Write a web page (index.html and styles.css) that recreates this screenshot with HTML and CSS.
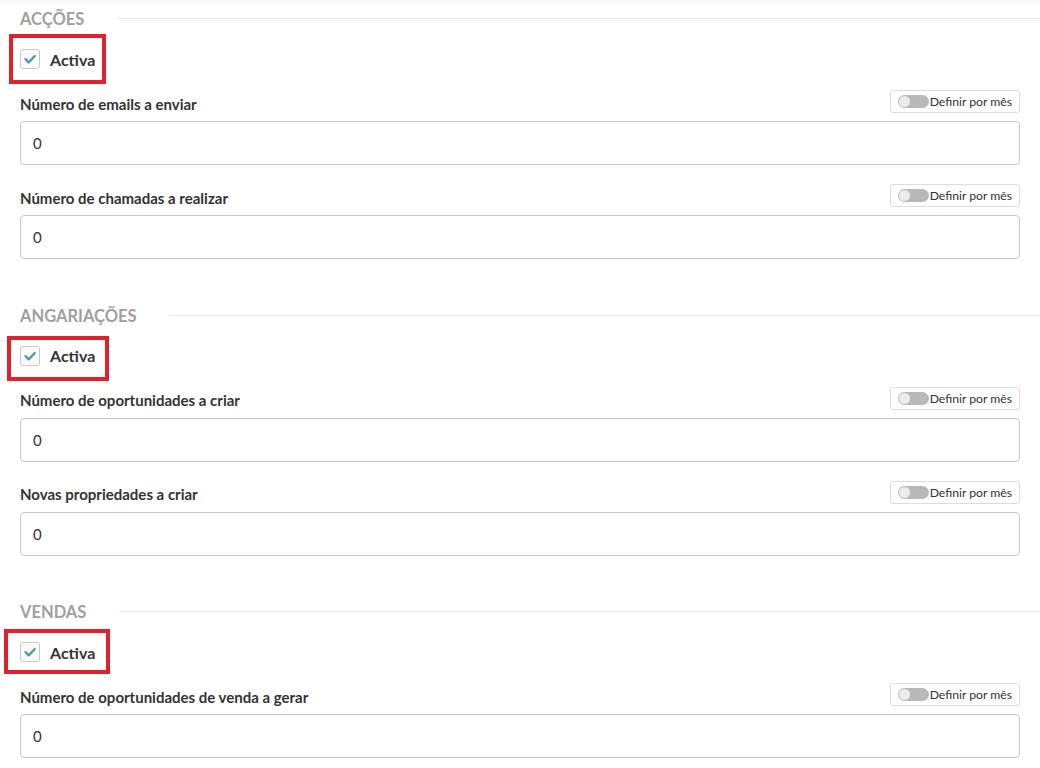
FILE: index.html
```html
<!DOCTYPE html>
<html lang="pt">
<head>
<meta charset="utf-8">
<title>Objetivos</title>
<link rel="stylesheet" href="styles.css">
</head>
<body>
<div class="topshade"></div>
<main class="page">
  <section class="group">
    <h2 class="group-title"><span>Acções</span></h2>
    <div class="active-row mark-a">
      <span class="checkbox"><svg viewBox="0 0 20 20" width="20" height="20"><path d="M5.5 10.2l3.2 3.2 6-6.2" fill="none" stroke="#4f9ea4" stroke-width="2.4" stroke-linecap="round" stroke-linejoin="round"/></svg></span>
      <span class="active-label">Activa</span>
    </div>
    <div class="field">
      <div class="field-head">
        <label class="field-label">Número de emails a enviar</label>
        <button class="toggle-btn"><span class="track"><span class="knob"></span></span>Definir por mês</button>
      </div>
      <div class="input">0</div>
    </div>
    <div class="field">
      <div class="field-head">
        <label class="field-label">Número de chamadas a realizar</label>
        <button class="toggle-btn"><span class="track"><span class="knob"></span></span>Definir por mês</button>
      </div>
      <div class="input">0</div>
    </div>
  </section>

  <section class="group">
    <h2 class="group-title"><span>Angariações</span></h2>
    <div class="active-row mark-b">
      <span class="checkbox"><svg viewBox="0 0 20 20" width="20" height="20"><path d="M5.5 10.2l3.2 3.2 6-6.2" fill="none" stroke="#4f9ea4" stroke-width="2.4" stroke-linecap="round" stroke-linejoin="round"/></svg></span>
      <span class="active-label">Activa</span>
    </div>
    <div class="field">
      <div class="field-head">
        <label class="field-label">Número de oportunidades a criar</label>
        <button class="toggle-btn"><span class="track"><span class="knob"></span></span>Definir por mês</button>
      </div>
      <div class="input">0</div>
    </div>
    <div class="field">
      <div class="field-head">
        <label class="field-label">Novas propriedades a criar</label>
        <button class="toggle-btn"><span class="track"><span class="knob"></span></span>Definir por mês</button>
      </div>
      <div class="input">0</div>
    </div>
  </section>

  <section class="group">
    <h2 class="group-title"><span>Vendas</span></h2>
    <div class="active-row mark-c">
      <span class="checkbox"><svg viewBox="0 0 20 20" width="20" height="20"><path d="M5.5 10.2l3.2 3.2 6-6.2" fill="none" stroke="#4f9ea4" stroke-width="2.4" stroke-linecap="round" stroke-linejoin="round"/></svg></span>
      <span class="active-label">Activa</span>
    </div>
    <div class="field">
      <div class="field-head">
        <label class="field-label">Número de oportunidades de venda a gerar</label>
        <button class="toggle-btn"><span class="track"><span class="knob"></span></span>Definir por mês</button>
      </div>
      <div class="input">0</div>
    </div>
  </section>
</main>
</body>
</html>
```

FILE: styles.css
```css
html, body {
  margin: 0;
  padding: 0;
  background: #fff;
  overflow: hidden;
}
body {
  font-family: Lato, "Open Sans", "Liberation Sans", sans-serif;
  color: #333;
}
.topshade {
  height: 0;
  box-shadow: 0 0 4px 1px rgba(0, 0, 0, 0.12);
}
.page {
  padding: 0 20px;
}
.group {
  padding-top: 9px;
  padding-bottom: 37.5px;
}
.group-title {
  display: flex;
  align-items: center;
  gap: 33px;
  margin: 0 -20px 0 0;
  height: 20px;
  font-size: 16.5px;
  font-weight: 700;
  color: #a0a0a0;
  text-transform: uppercase;
}
.group-title::after {
  content: "";
  flex: 1;
  height: 1px;
  background: #e8e8e8;
  margin-top: -1px;
}
.active-row {
  position: relative;
  display: flex;
  align-items: center;
  gap: 10px;
  height: 50px;
  margin-top: 5px;
}
.active-row::after {
  content: "";
  position: absolute;
  border: 4px solid #e0222d;
  box-sizing: border-box;
}
.mark-a::after { left: -11px; top: 0; width: 97px; height: 50px; }
.mark-b::after { left: -13px; top: 5px; width: 102px; height: 45px; }
.mark-c::after { left: -16px; top: 2px; width: 106px; height: 45px; }
.checkbox {
  width: 20px;
  height: 20px;
  box-sizing: border-box;
  border: 1px solid #c8c8c8;
  border-radius: 3px;
  background: #fafafa;
  display: flex;
  align-items: center;
  justify-content: center;
}
.checkbox svg {
  display: block;
  flex: none;
}
.active-label {
  font-size: 16px;
  font-weight: 700;
  color: #333;
}
.field {
  margin-top: 6px;
}
.field + .field {
  margin-top: 19px;
}
.field-head {
  display: flex;
  align-items: center;
  justify-content: space-between;
  height: 23px;
}
.field-label {
  font-size: 15px;
  font-weight: 700;
  color: #333;
  padding-top: 4px;
}
.toggle-btn {
  display: flex;
  align-items: center;
  gap: 1px;
  height: 23px;
  box-sizing: border-box;
  padding: 0 7px;
  border: 1px solid #dcdcdc;
  border-radius: 3px;
  background: #fff;
  font-family: inherit;
  font-size: 12.2px;
  color: #333;
}
.track {
  position: relative;
  width: 31px;
  height: 13px;
  border-radius: 7px;
  background: #b9b9b9;
  flex: none;
}
.knob {
  position: absolute;
  left: 1px;
  top: 1px;
  width: 11px;
  height: 11px;
  border-radius: 50%;
  background: #ececec;
}
.input {
  margin-top: 8px;
  height: 44px;
  box-sizing: border-box;
  border: 1px solid #c8c8c8;
  border-radius: 4px;
  padding: 0 12px;
  display: flex;
  align-items: center;
  font-size: 15px;
  color: #333;
}
```
